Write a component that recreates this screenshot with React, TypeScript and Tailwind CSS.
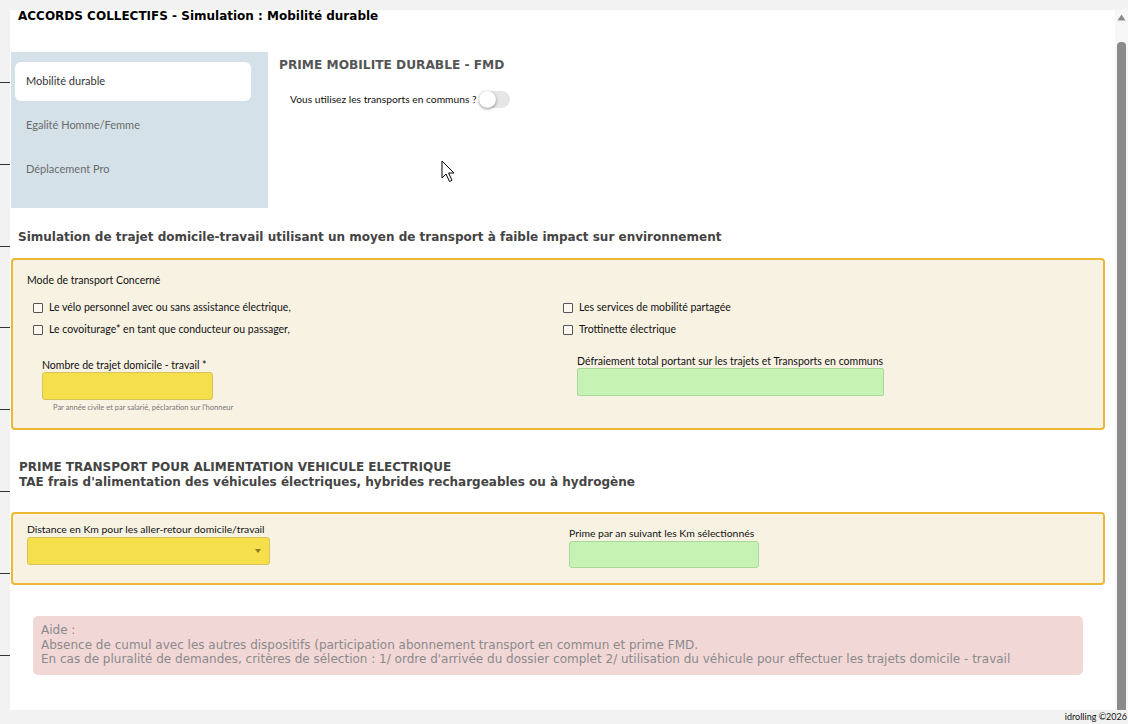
import React from "react";

const heading = "font-['DejaVu_Sans',sans-serif] font-bold";
const body = "font-['Lato',sans-serif]";

function Check({ label }: { label: string }) {
  return (
    <div className="flex h-[22px] items-center">
      <span className="ml-[6px] h-[10px] w-[10px] rounded-[1px] border border-[#555] bg-[#fbf8f0]" />
      <span className="ml-[6px] text-[10.5px] text-[#111]">{label}</span>
    </div>
  );
}

function Tab({ label, active }: { label: string; active?: boolean }) {
  return (
    <div
      className={
        "flex h-[39px] items-center rounded-[6px] px-[11px] text-[11px] " +
        (active ? "bg-white text-[#333]" : "text-[#6b6b6b]")
      }
    >
      {label}
    </div>
  );
}

function Cursor() {
  return (
    <svg width="16" height="24" viewBox="0 0 16 24" className="absolute left-[431px] top-[150px]">
      <path
        d="M1 1 L1 18 L5 14 L8.5 21.5 L11 20.3 L7.6 13 L13 13 Z"
        fill="white"
        stroke="black"
        strokeWidth="1"
        strokeLinejoin="round"
      />
    </svg>
  );
}

export default function App() {
  const ticks = [0, 1, 2, 3, 4, 5, 6, 7];

  return (
    <div className={"relative flex h-[724px] w-[1128px] flex-col overflow-hidden bg-[#f2f2f2] " + body}>
      <div className="h-[10px] shrink-0" />

      <div className="flex min-h-0 flex-1">
        {/* left gutter with row marks */}
        <div className="flex w-[10px] shrink-0 flex-col gap-[80.8px] pt-[72px]">
          {ticks.map((t) => (
            <div key={t} className="h-px w-[10px] bg-[#333]" />
          ))}
        </div>

        {/* main panel */}
        <div className="relative flex-1 bg-white">
          <h1 className={heading + " pl-[8px] text-[12px] leading-[13px] text-black"}>
            ACCORDS COLLECTIFS - Simulation : Mobilité durable
          </h1>

          <div className="mt-[29px] flex">
            <div className="ml-px flex h-[156px] w-[257px] flex-col gap-[5px] bg-[#d4e1e8] pl-[4px] pr-[17px] pt-[10px]">
              <Tab label="Mobilité durable" active />
              <Tab label="Egalité Homme/Femme" />
              <Tab label="Déplacement Pro" />
            </div>
            <div className="ml-[11px] pt-[6px]">
              <h2 className={heading + " text-[12.2px] leading-[14px] text-[#555]"}>
                PRIME MOBILITE DURABLE - FMD
              </h2>
              <div className="ml-[11px] mt-[19px] flex items-center">
                <span className="text-[10.25px] text-[#111]">Vous utilisez les transports en communs ?</span>
                <span className="ml-[2px] flex h-[17px] w-[31px] items-center rounded-full bg-[#e6e6e6]">
                  <span className="h-[17px] w-[17px] rounded-full bg-white shadow-[0_1px_3px_rgba(0,0,0,0.45)]" />
                </span>
              </div>
            </div>
          </div>

          <h2 className={heading + " mt-[21px] pl-[8px] text-[12px] leading-[16px] text-[#444]"}>
            Simulation de trajet domicile-travail utilisant un moyen de transport à faible impact sur
            environnement
          </h2>

          {/* transport mode box */}
          <div className="ml-px mr-[10px] mt-[13px] h-[172px] rounded-[4px] border-2 border-[#ebb935] bg-[#f8f2e3] pl-[14px] pt-[12px]">
            <div className="text-[10.5px] leading-[16px] text-[#111]">Mode de transport Concerné</div>
            <div className="mt-[9px] flex">
              <div className="w-[530px]">
                <Check label="Le vélo personnel avec ou sans assistance électrique," />
                <Check label="Le covoiturage* en tant que conducteur ou passager," />
                <div className="ml-[15px] mt-[17px] text-[10.5px] leading-[14px] text-[#111]">
                  Nombre de trajet domicile - travail *
                </div>
                <div className="ml-[15px] h-[28px] w-[171px] rounded-[3px] border border-[#d7c45c] bg-[#f5df4b]" />
                <div className="ml-[26px] mt-[3px] text-[7.5px] leading-[10px] text-[#777]">
                  Par année civile et par salarié, péclaration sur l'honneur
                </div>
              </div>
              <div>
                <Check label="Les services de mobilité partagée" />
                <Check label="Trottinette électrique" />
                <div className="ml-[20px] mt-[13px] text-[10.5px] leading-[14px] text-[#111]">
                  Défraiement total portant sur les trajets et Transports en communs
                </div>
                <div className="ml-[20px] h-[28px] w-[307px] rounded-[2px] border border-[#a9d89b] bg-[#c6f3b4]" />
              </div>
            </div>
          </div>

          <h2 className={heading + " mt-[30px] pl-[9px] text-[12px] leading-[15px] text-[#444]"}>
            PRIME TRANSPORT POUR ALIMENTATION VEHICULE ELECTRIQUE
            <br />
            TAE frais d'alimentation des véhicules électriques, hybrides rechargeables ou à hydrogène
          </h2>

          {/* electric vehicle box */}
          <div className="ml-px mr-[10px] mt-[22px] flex h-[73px] rounded-[4px] border-2 border-[#ebb935] bg-[#f8f2e3] pl-[14px]">
            <div className="w-[542px] pt-[8px]">
              <div className="text-[10.4px] leading-[14px] text-[#111]">
                Distance en Km pour les aller-retour domicile/travail
              </div>
              <div className="mt-px flex h-[28px] w-[243px] items-center justify-end rounded-[3px] border border-[#d7c45c] bg-[#f5df4b] pr-[8px]">
                <svg width="6" height="4" viewBox="0 0 6 4">
                  <path d="M0 0 L6 0 L3 4 Z" fill="#8a7a2a" />
                </svg>
              </div>
            </div>
            <div className="pt-[12px]">
              <div className="text-[10.4px] leading-[14px] text-[#111]">Prime par an suivant les Km sélectionnés</div>
              <div className="mt-px h-[27px] w-[190px] rounded-[3px] border border-[#a9d89b] bg-[#c6f3b4]" />
            </div>
          </div>

          {/* help note */}
          <div className="ml-[23px] mr-[32px] mt-[31px] rounded-[5px] bg-[#f2d7d7] pb-[8px] pl-[8px] pt-[7px] font-['DejaVu_Sans',sans-serif] text-[12px] leading-[14.5px] text-[#8a8a8a]">
            <div>Aide :</div>
            <div>
              Absence de cumul avec les autres dispositifs (participation abonnement transport en commun et
              prime FMD.
            </div>
            <div>
              En cas de pluralité de demandes, critères de sélection : 1/ ordre d'arrivée du dossier complet
              2/ utilisation du véhicule pour effectuer les trajets domicile - travail
            </div>
          </div>

          <Cursor />
        </div>

        {/* scrollbar */}
        <div className="flex w-[13px] shrink-0 flex-col items-center bg-[#f7f7f7]">
          <svg width="9" height="7" viewBox="0 0 9 7" className="mt-[4px]">
            <path d="M4.5 0.5 L8.5 6.5 L0.5 6.5 Z" fill="#8a8a8a" />
          </svg>
          <div className="mt-[21px] w-[9px] flex-1 rounded-t-[4px] bg-[#8b8b8b]" />
        </div>
      </div>

      <div className="flex h-[14px] shrink-0 items-center justify-end pr-px text-[9px] text-[#111]">
        idrolling ©2026
      </div>
    </div>
  );
}
